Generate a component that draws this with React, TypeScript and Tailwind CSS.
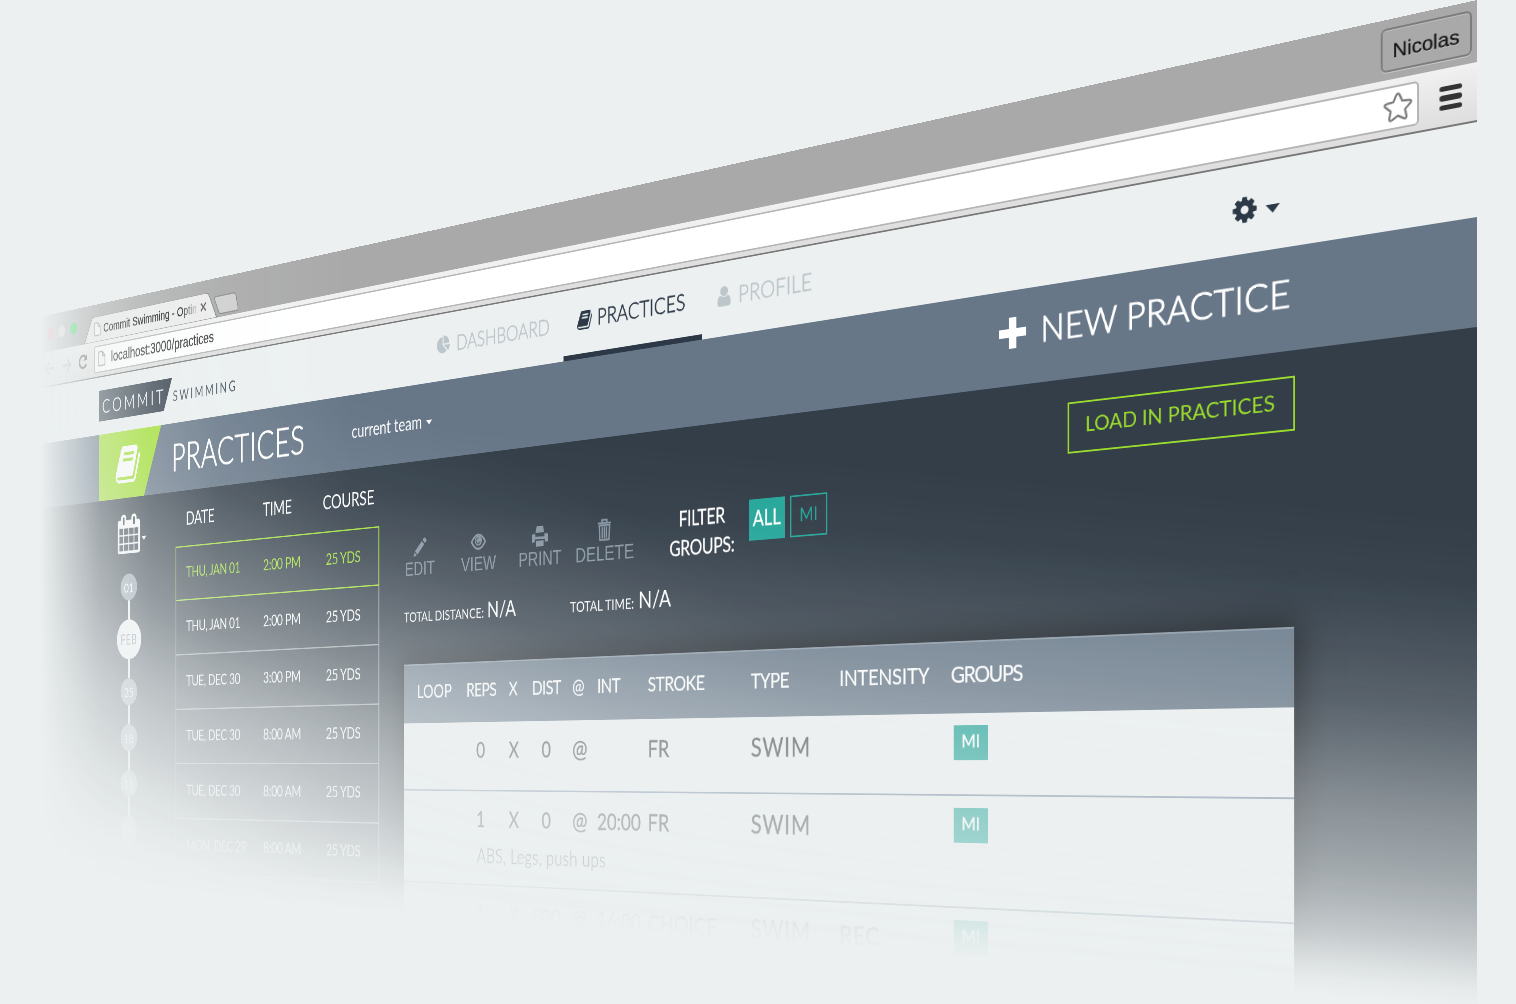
import React from "react";

const PLANE =
  "[transform-origin:0_0] [transform:matrix3d(0.337496,-0.12943,0,-0.000168748,0,0.586736,0,0,0,0,1,0,40.0825,316.973,0,1)]";
const FADE =
  "[mask-image:linear-gradient(90deg,transparent_40px,rgba(0,0,0,.2)_62px,rgba(0,0,0,.52)_100px,rgba(0,0,0,.75)_150px,rgba(0,0,0,.9)_220px,#000_350px),linear-gradient(185deg,#000_520px,rgba(0,0,0,.97)_590px,rgba(0,0,0,.87)_660px,rgba(0,0,0,.79)_713px,rgba(0,0,0,.7)_750px,rgba(0,0,0,.54)_813px,rgba(0,0,0,.4)_880px,rgba(0,0,0,.31)_913px,rgba(0,0,0,.2)_946px,rgba(0,0,0,.1)_970px,rgba(0,0,0,.03)_990px,transparent_1008px),radial-gradient(750px_500px_at_0px_950px,transparent_15%,rgba(0,0,0,.2)_30%,rgba(0,0,0,.47)_45%,rgba(0,0,0,.76)_70%,rgba(0,0,0,.93)_95%,#000_120%)] [mask-composite:intersect]";

type IconProps = { className?: string };

const glyph = (d: string) =>
  function Glyph({ className }: IconProps) {
    return (
      <svg viewBox="0 0 1792 1792" fill="currentColor" className={className}>
        <path d={d} />
      </svg>
    );
  };

const Book = glyph(
  "M1703 478q40 57 18 129l-275 906q-19 64-76.5 107.5t-122.5 43.5h-923q-77 0-148.5-53.5t-99.5-131.5q-24-67-2-127 0-4 3-27t4-37q1-8-3-21.5t-3-19.5q2-11 8-21t16.5-23.5 16.5-23.5q23-38 45-91.5t30-91.5q3-10 .5-30t-.5-28q3-11 17-28t17-23q21-36 42-92t25-90q1-9-2.5-32t.5-28q4-13 22-30.5t22-22.5q19-26 42.5-84.5t27.5-96.5q1-8-3-25.5t-2-26.5q2-8 9-18t18-23 17-21q8-12 16.5-30.5t15-35 16-36 19.5-32 26.5-23.5 36-11.5 47.5 5.5l-1 3q38-9 51-9h761q74 0 114 56t18 130l-274 906q-36 119-71.5 153.5t-128.5 34.5h-869q-27 0-38 15-11 16-1 43 24 70 144 70h923q29 0 56-15.5t35-41.5l300-987q7-22 5-57 38 15 59 43zm-1064 2q-4 13 2 22.5t20 9.5h608q13 0 25.5-9.5t16.5-22.5l21-64q4-13-2-22.5t-20-9.5h-608q-13 0-25.5 9.5t-16.5 22.5zm-83 256q-4 13 2 22.5t20 9.5h608q13 0 25.5-9.5t16.5-22.5l21-64q4-13-2-22.5t-20-9.5h-608q-13 0-25.5 9.5t-16.5 22.5z"
);
const Cog = glyph(
  "M1152 896q0-106-75-181t-181-75-181 75-75 181 75 181 181 75 181-75 75-181zm512-109v222q0 12-8 23t-20 13l-185 28q-19 54-39 91 35 50 107 138 10 12 10 25t-9 23q-27 37-99 108t-94 71q-12 0-26-9l-138-108q-44 23-91 38-16 136-29 186-7 28-36 28h-222q-14 0-24.5-8.5t-11.5-21.5l-28-184q-49-16-90-37l-141 107q-10 9-25 9-14 0-25-11-126-114-165-168-7-10-7-23 0-12 8-23 15-21 51-66.5t54-70.5q-27-50-41-99l-183-27q-13-2-21-12.5t-8-23.5v-222q0-12 8-23t19-13l186-28q14-46 39-92-40-57-107-138-10-12-10-24 0-10 9-23 26-36 98.5-107.5t94.5-71.5q13 0 26 10l138 107q44-23 91-38 16-136 29-186 7-28 36-28h222q14 0 24.5 8.5t11.5 21.5l28 184q49 16 90 37l142-107q9-9 24-9 13 0 25 10 129 119 165 170 7 8 7 22 0 12-8 23-15 21-51 66.5t-54 70.5q26 50 41 98l183 28q13 2 21 12.5t8 23.5z"
);
const User = glyph(
  "M1536 1399q0 109-62.5 187t-150.5 78h-854q-88 0-150.5-78t-62.5-187q0-85 8.5-160.5t31.5-152 58.5-131 94-89 134.5-34.5q131 128 313 128t313-128q76 0 134.5 34.5t94 89 58.5 131 31.5 152 8.5 160.5zm-256-887q0 159-112.5 271.5t-271.5 112.5-271.5-112.5-112.5-271.5 112.5-271.5 271.5-112.5 271.5 112.5 112.5 271.5z"
);
const Calendar = glyph(
  "M192 1664h288v-288h-288v288zm352 0h320v-288h-320v288zm-352-352h288v-320h-288v320zm352 0h320v-320h-320v320zm-352-384h288v-288h-288v288zm736 736h320v-288h-320v288zm-384-736h320v-288h-320v288zm768 736h288v-288h-288v288zm-384-352h320v-320h-320v320zm-352-864v-288q0-13-9.5-22.5t-22.5-9.5h-64q-13 0-22.5 9.5t-9.5 22.5v288q0 13 9.5 22.5t22.5 9.5h64q13 0 22.5-9.5t9.5-22.5zm736 864h288v-320h-288v320zm-384-384h320v-288h-320v288zm384 0h288v-288h-288v288zm32-480v-288q0-13-9.5-22.5t-22.5-9.5h-64q-13 0-22.5 9.5t-9.5 22.5v288q0 13 9.5 22.5t22.5 9.5h64q13 0 22.5-9.5t9.5-22.5zm384-64v1280q0 52-38 90t-90 38h-1408q-52 0-90-38t-38-90v-1280q0-52 38-90t90-38h128v-96q0-66 47-113t113-47h64q66 0 113 47t47 113v96h384v-96q0-66 47-113t113-47h64q66 0 113 47t47 113v96h128q52 0 90 38t38 90z"
);
const Pie = glyph(
  "M768 890l546 546q-106 108-247.5 168t-298.5 60q-209 0-385.5-103t-279.5-279.5-103-385.5 103-385.5 279.5-279.5 385.5-103v762zm187 6h773q0 157-60 298.5t-168 247.5zm709-128h-768v-768q209 0 385.5 103t279.5 279.5 103 385.5z"
);

const Caret = ({ className }: IconProps) => (
  <svg viewBox="0 0 16 9" fill="currentColor" className={className}>
    <path d="M0 0h16L8 9z" />
  </svg>
);
const Page = ({ className }: IconProps) => (
  <svg viewBox="0 0 20 26" fill="#fafafa" stroke="#9b9b9b" strokeWidth="2" className={className}>
    <path d="M1.500 1.500h10l7 7v16h-17zM11.500 1.500v7h7" />
  </svg>
);
const Pencil = ({ className }: IconProps) => (
  <svg viewBox="0 0 28 28" fill="currentColor" className={className}>
    <path d="M22 1.500q1.500-1.500 3 0l2 2q1.500 1.500 0 3l-2.500 2.500-5-5zM18 5.500l5 5L9 24.500l-5-5zM3 21l4.500 4.500L1 27.500z" />
  </svg>
);
const Eye = ({ className }: IconProps) => (
  <svg viewBox="0 0 30 24" className={className}>
    <path d="M1.500 12Q8 2 15 2t13.500 10Q22 22 15 22T1.500 12z" fill="none" stroke="currentColor" strokeWidth="3" />
    <circle cx="15" cy="10.500" r="7" fill="currentColor" />
    <path d="M15.500 6.500a4 4 0 1 0 3 5" fill="none" stroke="#4b5660" strokeWidth="2" />
  </svg>
);
const Printer = ({ className }: IconProps) => (
  <svg viewBox="0 0 30 28" fill="currentColor" className={className}>
    <path d="M9 0h12l2 9H7zM2 10.500h4.500v4h17v-4H28q2 0 2 2V22h-5.500v-4h-19v4H0v-9.500q0-2 2-2zM8 20h14v8H8z" />
  </svg>
);
const Trash = ({ className }: IconProps) => (
  <svg viewBox="0 0 26 31" fill="none" stroke="currentColor" strokeWidth="2.600" className={className}>
    <path d="M1 6.500h24M8.500 6V2h9v4M3.500 9.500h19l-1 20h-17zM9 12v15M13 12v15M17 12v15" />
  </svg>
);
const Plus = ({ className }: IconProps) => (
  <svg viewBox="0 0 36 36" fill="currentColor" className={className}>
    <path d="M13 0h10v13h13v10H23v13H13V23H0V13h13z" />
  </svg>
);

function Browser() {
  return (
    <div className="h-[122px] bg-[#a9a9a9] font-['Liberation_Sans',sans-serif]">
      <div className="flex h-[62px] items-end">
        <div className="mb-[20px] ml-[18px] flex gap-[14px]">
          <span className="size-[20px] rounded-full bg-[#fb5f63]" />
          <span className="size-[20px] rounded-full bg-[#e3d3d3]" />
          <span className="size-[20px] rounded-full bg-[#22d24e]" />
        </div>
        <div className="relative ml-[16px] h-[42px] w-[356px]">
          <svg viewBox="0 0 356 42" className="absolute inset-0 h-full w-full">
            <path d="M0 42q6-1 8-7l15-29q2-6 8-6h292q6 0 9 6l15 30q2 6 8 6z" fill="#ececec" stroke="#7d7d7d" strokeWidth="1.500" />
          </svg>
          <div className="relative flex h-full items-center pl-[31px]">
            <Page className="h-[24px] w-[18px]" />
            <span className="ml-[7px] w-[244px] text-[21px] tracking-[0.050px] whitespace-nowrap text-[#111] [-webkit-text-stroke:0.3px] [mask-image:linear-gradient(90deg,#000_205px,transparent_250px)]">
              Commit Swimming - Optim
            </span>
            <svg viewBox="0 0 14 14" className="ml-[10px] w-[14px]" stroke="#555" strokeWidth="2.500">
              <path d="M1 1l12 12M13 1L1 13" />
            </svg>
          </div>
        </div>
        <svg viewBox="0 0 60 30" className="mb-[4px] -ml-[12px] h-[30px] w-[60px]">
          <path d="M3 1h44q4 0 6 4l5 19q1 5-4 5H18q-5 0-7-4L1 5q-1-4 2-4z" fill="#cfcfcf" stroke="#808080" strokeWidth="1.600" />
        </svg>
        <div className="mr-[5px] mb-[8px] ml-auto flex h-[45px] w-[94px] items-center justify-center rounded-[6px] border-2 border-[#7c7c7c] bg-[#a9a9a9] pt-[3px] text-[21px] text-[#111] shadow-[0_1px_0_#c9c9c9,inset_0_1px_0_#bdbdbd] [-webkit-text-stroke:0.3px] [text-shadow:0_1px_0_#d0d0d0]">
          Nicolas
        </div>
      </div>
      <div className="flex h-[60px] items-center border-b-2 border-[#777] bg-gradient-to-b from-[#f1f1f1] to-[#dedede] pl-[14px]">
        <svg viewBox="0 0 28 24" className="w-[28px]" fill="none" stroke="#999" strokeWidth="3.500">
          <path d="M27 12H3M13 2L3 12l10 10" />
        </svg>
        <svg viewBox="0 0 28 24" className="ml-[20px] w-[28px]" fill="none" stroke="#bbb" strokeWidth="3.500">
          <path d="M1 12h24M15 2l10 10-10 10" />
        </svg>
        <svg viewBox="0 0 28 28" className="ml-[18px] w-[28px]" fill="none" stroke="#666" strokeWidth="4">
          <path d="M23 18.500A10 10 0 1 1 21 6.500" />
          <path d="M26 1v11H15z" fill="#666" stroke="none" />
        </svg>
        <div className="ml-[17px] flex h-[45px] w-[2237px] items-center rounded-[5px] border-2 border-[#b5b5b5] bg-white pr-[4px] pl-[9px]">
          <Page className="h-[26px] w-[20px]" />
          <span className="ml-[15px] text-[24.800px] text-[#333] [-webkit-text-stroke:0.3px]">localhost:3000/practices</span>
          <svg viewBox="0 0 32 31" className="ml-auto w-[32px]" fill="#fff" stroke="#7a7a7a" strokeWidth="2.200" strokeLinejoin="round">
            <path d="M14.300 3.300q1.700-3 3.400 0l2.900 6.600 7.400.8q3.300.7 1 3.200l-5.500 5.100 1.500 7.300q.2 3.200-2.700 1.900L16 24.500l-6.300 3.700q-2.900 1.300-2.700-1.900l1.500-7.300L3 13.900q-2.300-2.500 1-3.200l7.400-.8z" />
          </svg>
        </div>
        <div className="ml-[21px] flex w-[23px] flex-col gap-[4px] pt-[2px]">
          <span className="h-[5.500px] rounded-full bg-[#333]" />
          <span className="h-[5.500px] rounded-full bg-[#333]" />
          <span className="h-[5.500px] rounded-full bg-[#333]" />
        </div>
      </div>
    </div>
  );
}

function Nav() {
  const label = "pb-[6px] text-[29.500px] font-light [-webkit-text-stroke:0.8px]";
  return (
    <div className="flex h-[95px] items-center bg-[#ecf0f0]">
      <div className="ml-[166px] flex h-[51px] w-[194px] items-center bg-gradient-to-r from-[#45515c] to-[#333e49] pl-[9px] text-[32px] font-light tracking-[6.200px] text-white [-webkit-text-stroke:0.4px] [clip-path:polygon(0_0,100%_0,89%_100%,0_100%)]">
        COMMIT
      </div>
      <span className="w-[605px] pt-[7px] pl-[2px] text-[23px] tracking-[4.300px] text-[#4a5561]">SWIMMING</span>
      <div className="flex h-full w-[245px] items-center text-[#bdc7cb]">
        <Pie className="size-[27px] -translate-y-[3px]" />
        <span className={`${label} ml-[12px]`}>DASHBOARD</span>
      </div>
      <div className="flex h-full w-[242px] items-center border-b-[7px] border-[#2d3947] pt-[3px] pl-[24px] text-[#2d3947]">
        <Book className="size-[29px] -translate-y-[2px]" />
        <span className={`${label} ml-[8px] tracking-[0.200px]`}>PRACTICES</span>
      </div>
      <div className="flex h-full items-center pl-[21px] text-[#bdc7cb]">
        <User className="size-[30px] -translate-y-[4px]" />
        <span className={`${label} ml-[8px] tracking-[0.200px]`}>PROFILE</span>
      </div>
      <div className="mr-[209px] ml-auto flex items-center gap-[8px] text-[#2d3947]">
        <Cog className="size-[32px]" />
        <Caret className="mt-[8px] w-[16px]" />
      </div>
    </div>
  );
}

function TitleBar() {
  return (
    <div className="flex h-[110px] items-center bg-[#677788] text-white">
      <div className="ml-[166px] h-full w-[166px] bg-[#a0e02c] pt-[20px] pl-[43px] text-white [clip-path:polygon(0_0,100%_0,73%_100%,0_100%)]">
        <Book className="size-[70px]" />
      </div>
      <h1 className="ml-[27px] w-[426px] pb-[3px] text-[61px] font-light tracking-[1px] [-webkit-text-stroke:1.2px]">PRACTICES</h1>
      <span className="pb-[1px] text-[26.500px]">current team</span>
      <Caret className="mt-[3px] ml-[9px] w-[12px]" />
      <div className="mr-[198px] ml-auto flex items-center pb-[11px]">
        <Plus className="size-[36px] -translate-x-[2px] -translate-y-[1px]" />
        <span className="ml-[17px] w-[301px] pb-[2px] text-[41px] font-light tracking-[0.600px] whitespace-nowrap [-webkit-text-stroke:1.2px]">
          NEW PRACTICE
        </span>
      </div>
    </div>
  );
}

function Timeline() {
  const small =
    "flex size-[44px] items-center justify-center rounded-full bg-[#93a1ad] text-[22px] text-white";
  const line = "h-[31px] w-[5px] bg-white";
  return (
    <div className="ml-[215px] flex w-[64px] flex-col items-center pt-[27px] text-white">
      <div className="flex w-[64px] items-center">
        <Calendar className="size-[64px] shrink-0" />
        <Caret className="mt-[18px] ml-[2px] w-[12px] shrink-0" />
      </div>
      <div className={`${small} mt-[33px]`}>01</div>
      <span className={line} />
      <div className="flex size-[65px] items-center justify-center rounded-full bg-white text-[23px] tracking-[1px] text-[#7d8c99]">
        FEB
      </div>
      <span className={line} />
      <div className={small}>25</div>
      <span className={line} />
      <div className={small}>18</div>
      <span className={line} />
      <div className={small}>11</div>
      <span className={line} />
      <div className={small}>04</div>
    </div>
  );
}

const practices = [
  ["THU, JAN 01", "2:00 PM", "25 YDS"],
  ["THU, JAN 01", "2:00 PM", "25 YDS"],
  ["TUE, DEC 30", "3:00 PM", "25 YDS"],
  ["TUE, DEC 30", "8:00 AM", "25 YDS"],
  ["TUE, DEC 30", "8:00 AM", "25 YDS"],
  ["MON, DEC 29", "8:00 AM", "25 YDS"],
];

function PracticeList() {
  return (
    <div className="ml-[90px] w-[476px] text-white">
      <div className="grid h-[88px] grid-cols-[188px_138px_auto] items-center pl-[26px] text-[29px] tracking-[-0.200px]">
        <span>DATE</span>
        <span>TIME</span>
        <span>COURSE</span>
      </div>
      {practices.map((row, i) => (
        <div
          key={i}
          className={`grid h-[87px] grid-cols-[188px_144px_auto] items-center pb-[6px] pl-[25px] text-[24px] tracking-[-0.500px] ${
            i === 0
              ? "border-2 border-[#a0e234] text-[#a0e234]"
              : "border-x-2 border-b-2 border-[#ffffff80]"
          }`}
        >
          {row.map((cell, j) => (
            <span key={j}>{cell}</span>
          ))}
        </div>
      ))}
    </div>
  );
}

function Actions() {
  const item = "flex w-[118px] flex-col items-center gap-[2px]";
  return (
    <div className="-ml-[26px] flex pt-[11px] font-['Liberation_Sans',sans-serif] text-[27px] leading-[31px] text-[#8493a1]">
      <div className={item}>
        <Pencil className="h-[28px] w-[28px]" />
        EDIT
      </div>
      <div className={item}>
        <Eye className="h-[28px] w-[30px]" />
        VIEW
      </div>
      <div className={item}>
        <Printer className="h-[28px] w-[30px]" />
        PRINT
      </div>
      <div className={item}>
        <Trash className="-mt-[2px] h-[30px] w-[26px]" />
        DELETE
      </div>
    </div>
  );
}

type SetRow = {
  reps: string;
  dist: string;
  int: string;
  stroke: string;
  type: string;
  intensity: string;
  note?: string;
};

const sets: SetRow[] = [
  { reps: "0", dist: "0", int: "", stroke: "FR", type: "SWIM", intensity: "" },
  { reps: "1", dist: "0", int: "20:00", stroke: "FR", type: "SWIM", intensity: "", note: "ABS, Legs, push ups" },
  { reps: "1", dist: "800", int: "16:00", stroke: "CHOICE", type: "SWIM", intensity: "REC" },
];

function SetTable() {
  const grid = "grid grid-cols-[100px_83px_44px_75px_45px_89px_171px_137px_161px_auto] items-center pl-[27px]";
  return (
    <div className="mt-[53px] h-[640px] w-[1359px] bg-[#ecf0f0] shadow-[0_0_36px_6px_rgba(0,0,0,.6)]">
      <div className={`${grid} h-[85px] border-t-2 border-[#8b98a5] bg-[#6b7b8b] pb-[7px] text-[26.500px] tracking-[-0.800px] text-white [-webkit-text-stroke:0.2px]`}>
        <span className="tracking-normal">LOOP</span>
        <span>REPS</span>
        <span>X</span>
        <span>DIST</span>
        <span>@</span>
        <span>INT</span>
        <span>STROKE</span>
        <span>TYPE</span>
        <span className="tracking-[-0.200px]">INTENSITY</span>
        <span className="tracking-[-1.700px]">GROUPS</span>
      </div>
      {sets.map((s, i) => (
        <div key={i} className={`border-b-2 border-[#7d90a5] text-[#444] ${s.note ? "h-[132px]" : "h-[97px]"}`}>
          <div className={`${grid} h-[76px] text-[30px] [-webkit-text-stroke:0.3px]`}>
            <span />
            <span className="w-[57px] text-center">{s.reps}</span>
            <span>X</span>
            <span className="w-[54px] text-center">{s.dist}</span>
            <span className="text-[33px]">@</span>
            <span className="whitespace-nowrap">{s.int}</span>
            <span className="text-[31px]">{s.stroke}</span>
            <span className="text-[32px] tracking-[1.300px]">{s.type}</span>
            <span className="text-[31px] tracking-[0.800px]">{s.intensity}</span>
            <span className="ml-[4px] flex h-[41px] w-[47px] -translate-y-[4px] items-center justify-center bg-[#26a69a] pb-[5px] text-[21px] text-white">
              MI
            </span>
          </div>
          {s.note && <p className="-mt-[6px] pl-[148px] text-[27px] font-light tracking-[0.500px] [-webkit-text-stroke:0.3px]">{s.note}</p>}
        </div>
      ))}
    </div>
  );
}

function Detail() {
  return (
    <div className="ml-[52px] w-[1360px] text-white">
      <div className="flex justify-end pt-[27px]">
        <button className="flex h-[58px] w-[272px] items-center justify-center border-2 border-[#9bdd2c] pb-[7px] text-[24px] whitespace-nowrap text-[#9bdd2c]">
          LOAD IN PRACTICES
        </button>
      </div>
      <div className="mt-[14px] flex h-[78px]">
        <Actions />
        <div className="ml-[53px] w-[110px] text-center text-[26px] leading-[38px] tracking-[-0.500px] [-webkit-text-stroke:0.3px]">
          FILTER GROUPS:
        </div>
        <div className="mt-[3px] ml-[22px] flex gap-[8px] text-[26px]">
          <span className="flex h-[52px] w-[57px] items-center justify-center bg-[#26a69a] pb-[4px] [-webkit-text-stroke:0.3px]">ALL</span>
          <span className="flex h-[52px] w-[57px] items-center justify-center border-2 border-[#26a69a] pb-[4px] text-[23px] text-[#26a69a]">
            MI
          </span>
        </div>
      </div>
      <div className="mt-[22px] flex h-[40px] items-baseline text-[19.500px] leading-[40px]">
        <span className="w-[168px] whitespace-nowrap">TOTAL DISTANCE:</span>
        <span className="w-[157px] text-[30.500px]">N/A</span>
        <span className="w-[122px] whitespace-nowrap">TOTAL TIME:</span>
        <span className="text-[30.500px]">N/A</span>
      </div>
      <SetTable />
    </div>
  );
}

export default function App() {
  return (
    <div className="h-[1004px] w-[1516px] overflow-hidden bg-[#ecf0f0] font-['Lato',sans-serif]">
      <div className={`h-[1004px] w-[1516px] overflow-hidden ${FADE}`}>
        <div className={`h-[1200px] w-[2449px] overflow-hidden ${PLANE}`}>
          <Browser />
          <Nav />
          <TitleBar />
          <div className="flex h-[880px] bg-[#333e49]">
            <Timeline />
            <PracticeList />
            <Detail />
          </div>
        </div>
      </div>
    </div>
  );
}
